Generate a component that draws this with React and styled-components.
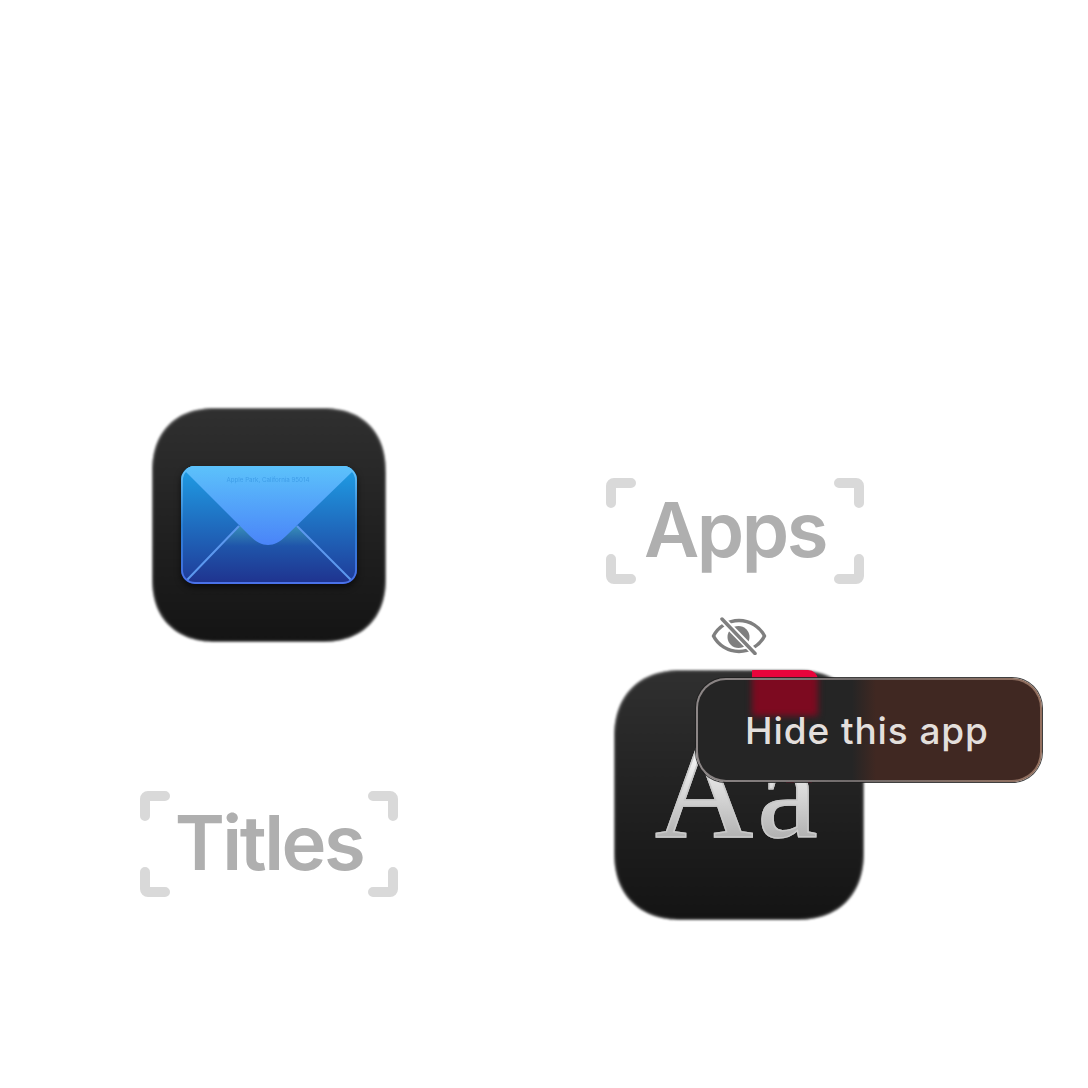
import styled, { createGlobalStyle } from 'styled-components';

const GlobalStyle = createGlobalStyle`
  html, body {
    margin: 0;
    padding: 0;
    background: #fff;
  }
  body {
    font-family: "Inter", "Liberation Sans", sans-serif;
  }
`;

const Page = styled.div`
  width: 1088px;
  height: 1088px;
  overflow: hidden;
  display: flex;
  gap: 208px;
  padding-left: 140px;
  box-sizing: border-box;
`;

const LeftColumn = styled.div`
  width: 258px;
  padding-top: 408px;
  display: flex;
  flex-direction: column;
  align-items: center;
  gap: 149px;
`;

const RightColumn = styled.div`
  width: 258px;
  padding-top: 478px;
  display: flex;
  flex-direction: column;
  align-items: center;
`;

const AppIcon = styled.div`
  position: relative;
  flex: none;
  width: ${(p) => p.$size}px;
  height: ${(p) => p.$size}px;
  display: flex;
  align-items: center;
  justify-content: center;

  &::before {
    content: '';
    position: absolute;
    inset: 0;
    border-radius: ${(p) => p.$radius}px;
    corner-shape: superellipse(1.2);
    background: linear-gradient(180deg, #303030 0%, #232323 45%, #141414 100%);
    box-shadow: inset 0 0 2px 1px rgba(180, 180, 180, 0.6);
    filter: blur(0.8px);
  }
`;

const Tag = styled.div`
  position: relative;
  width: 258px;
  height: 106px;
  padding-bottom: 5px;
  box-sizing: border-box;
  display: flex;
  align-items: center;
  justify-content: center;
  color: #afafaf;
  font-size: 76px;
  font-weight: 600;
  letter-spacing: -2.5px;
  line-height: 1;
`;

const CornerMark = styled.svg`
  position: absolute;
  width: 30px;
  height: 30px;
  ${(p) => (p.$top ? 'top: 0;' : 'bottom: 0;')}
  ${(p) => (p.$left ? 'left: 0;' : 'right: 0;')}
  transform: scale(${(p) => (p.$left ? 1 : -1)}, ${(p) => (p.$top ? 1 : -1)});
`;

const Corner = ({ top, left }) => (
  <CornerMark $top={top} $left={left} viewBox="0 0 30 30" fill="none">
    <path d="M5 25V8a3 3 0 0 1 3-3H25" stroke="#d9d9d9" strokeWidth="10" strokeLinecap="round" />
  </CornerMark>
);

const Brackets = () => (
  <>
    <Corner top left />
    <Corner top />
    <Corner left />
    <Corner />
  </>
);

const EyeWrap = styled.div`
  margin-top: 33px;
  height: 39px;
  margin-left: 8px;
  display: flex;
`;

const FontIconWrap = styled.div`
  position: relative;
  width: 250px;
  height: 250px;
  margin-top: 14px;
  margin-left: 8px;
  flex: none;
`;

const RedTab = styled.span`
  position: absolute;
  top: 0;
  left: 138px;
  width: 66px;
  height: 10px;
  background: #e8043c;
  border-radius: 1px 12px 0 0;
`;

const RedSliver = styled.span`
  position: absolute;
  top: 110px;
  left: 172px;
  width: 26px;
  height: 3px;
  background: #c5052f;
`;

const AaGlyph = styled.span`
  position: absolute;
  left: 41px;
  top: 51px;
  font-family: "Liberation Serif", serif;
  font-size: 136px;
  letter-spacing: 4px;
  line-height: 140px;
  background: linear-gradient(180deg, #f4f4f4 25%, #d4d4d4 55%, #b0b0b0 85%);
  -webkit-background-clip: text;
  background-clip: text;
  color: transparent;
  -webkit-text-stroke: 1.5px #c9c9c9;
`;

const Tooltip = styled.div`
  position: absolute;
  left: 82px;
  top: 8px;
  width: 346px;
  height: 104px;
  box-sizing: border-box;
  overflow: hidden;
  border-radius: 30px;
  border: 2.5px solid transparent;
  background:
    linear-gradient(90deg, #252525 0%, #252525 45%, #402822 52%, #402822 100%) padding-box,
    linear-gradient(90deg, #8d8787 0%, #706b6b 45%, #94705f 100%) border-box;
  box-shadow: 0 0 0 1px rgba(30, 30, 30, 0.85);
  color: #e3dfdc;
  font-size: 37px;
  font-weight: 500;
  letter-spacing: 0.9px;
  display: flex;
  align-items: center;
  justify-content: center;
  padding-right: 4px;

  &::before {
    content: '';
    position: absolute;
    top: -8px;
    left: 54px;
    width: 66px;
    height: 44px;
    background: #7d0a20;
    filter: blur(3px);
  }
`;

const TipLabel = styled.span`
  position: relative;
`;

const EyeOff = () => (
  <svg width="56" height="38" viewBox="0 0 56 38" fill="none">
    <path d="M2.500 19C7 10 17 3.500 28 3.500S49 10 53.500 19C49 28 39 34.500 28 34.500S7 28 2.500 19Z" stroke="#7f7f7f" strokeWidth="3.500" strokeLinejoin="round" />
    <circle cx="27.500" cy="20" r="11" fill="#7f7f7f" />
    <path d="M8 -1 47 39" stroke="#fff" strokeWidth="7" />
    <path d="M11 2 44 36.500" stroke="#7f7f7f" strokeWidth="3.500" strokeLinecap="round" />
  </svg>
);

const EnvelopeSvg = styled.svg`
  position: relative;
  margin-top: 6px;
  filter: drop-shadow(0 3px 3px rgba(0, 0, 0, 0.6)) blur(0.6px);
`;

const Envelope = () => (
  <EnvelopeSvg width="178" height="124" viewBox="0 0 178 124">
    <defs>
      <linearGradient id="body" x1="0" y1="0" x2="0" y2="1">
        <stop offset="0" stopColor="#1f9fe6" />
        <stop offset="1" stopColor="#1f3a98" />
      </linearGradient>
      <linearGradient id="lower" x1="0" y1="0" x2="0" y2="1">
        <stop offset="0" stopColor="#388fb8" />
        <stop offset="0.35" stopColor="#1f55aa" />
        <stop offset="1" stopColor="#1f338f" />
      </linearGradient>
      <linearGradient id="flap" x1="0" y1="0" x2="0" y2="1">
        <stop offset="0" stopColor="#5cc2fb" />
        <stop offset="1" stopColor="#4a84f8" />
      </linearGradient>
      <linearGradient id="rim" x1="0" y1="0" x2="0" y2="1">
        <stop offset="0" stopColor="#6cc4fa" />
        <stop offset="0.5" stopColor="#2a7fd4" />
        <stop offset="1" stopColor="#4a72ea" />
      </linearGradient>
    </defs>
    <rect x="1" y="0" width="176" height="118" rx="14" fill="url(#body)" />
    <path d="M7 114 59 60H117L171 114C169 116 166 117 163 117H15C12 117 9 116 7 114Z" fill="url(#lower)" />
    <path d="M7 114 59 60M171 114 117 60" stroke="#5c98ee" strokeWidth="2" fill="none" />
    <rect x="2" y="1" width="174" height="116" rx="13" fill="none" stroke="url(#rim)" strokeWidth="1.800" />
    <path d="M5 5C7 2 10 0 15 0H163C168 0 171 2 173 5L106 70C100 76 94 79 88 79S76 76 70 70Z" fill="url(#flap)" />
    <text x="88" y="16" fontSize="6.200" textAnchor="middle" fill="#3f9ee8" fontFamily="Inter, sans-serif">Apple Park, California 95014</text>
  </EnvelopeSvg>
);

export default function App() {
  return (
    <Page>
      <GlobalStyle />
      <LeftColumn>
        <AppIcon $size={234} $radius={64}>
          <Envelope />
        </AppIcon>
        <Tag>
          <Brackets />
          Titles
        </Tag>
      </LeftColumn>
      <RightColumn>
        <Tag>
          <Brackets />
          Apps
        </Tag>
        <EyeWrap>
          <EyeOff />
        </EyeWrap>
        <FontIconWrap>
          <AppIcon $size={250} $radius={68}>
            <RedTab />
            <RedSliver />
            <AaGlyph>Aa</AaGlyph>
          </AppIcon>
          <Tooltip>
            <TipLabel>Hide this app</TipLabel>
          </Tooltip>
        </FontIconWrap>
      </RightColumn>
    </Page>
  );
}
